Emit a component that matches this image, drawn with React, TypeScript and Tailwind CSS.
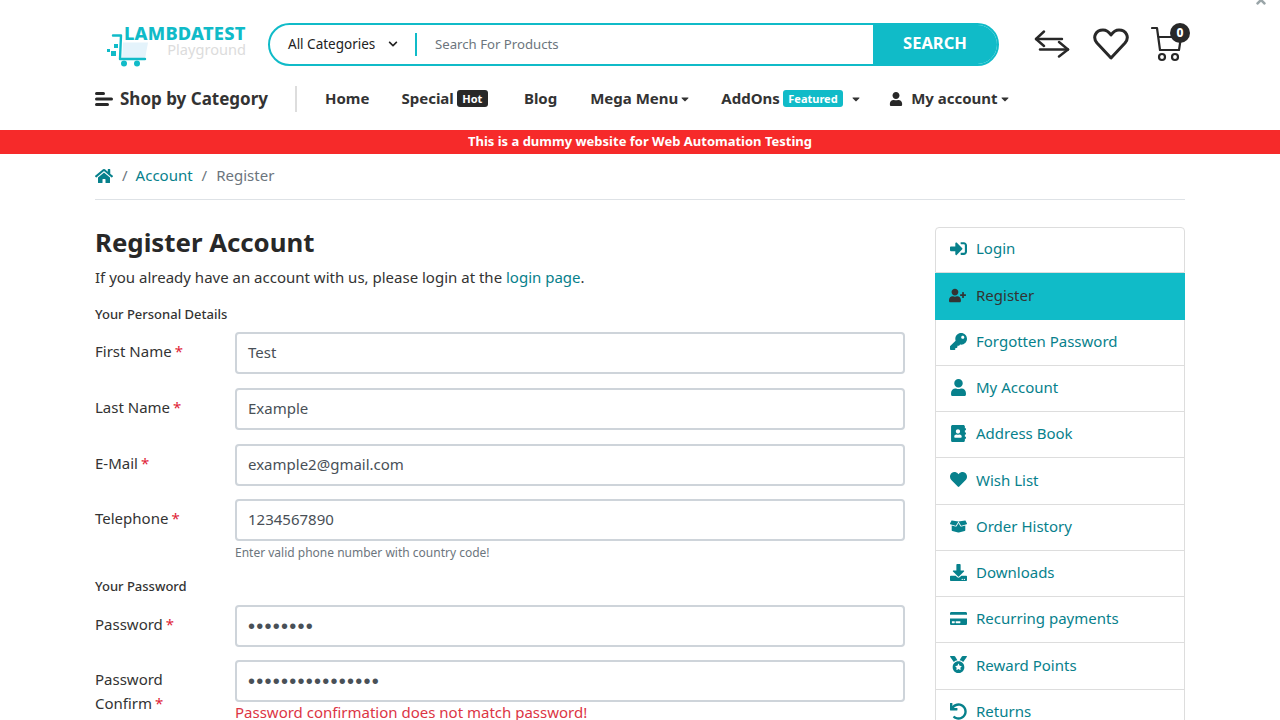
import { ReactNode } from "react";
import {
  FaAddressBook,
  FaBoxOpen,
  FaCaretDown,
  FaChevronDown,
  FaCreditCard,
  FaDownload,
  FaHeart,
  FaHome,
  FaKey,
  FaMedal,
  FaSignInAlt,
  FaTimes,
  FaUndo,
  FaUser,
  FaUserPlus,
} from "react-icons/fa";

const sideLinks = [
  { icon: <FaSignInAlt />, text: "Login" },
  { icon: <FaUserPlus />, text: "Register", active: true },
  { icon: <FaKey />, text: "Forgotten Password" },
  { icon: <FaUser />, text: "My Account" },
  { icon: <FaAddressBook />, text: "Address Book" },
  { icon: <FaHeart />, text: "Wish List" },
  { icon: <FaBoxOpen />, text: "Order History" },
  { icon: <FaDownload />, text: "Downloads" },
  { icon: <FaCreditCard />, text: "Recurring payments" },
  { icon: <FaMedal />, text: "Reward Points" },
  { icon: <FaUndo />, text: "Returns" },
];

const Logo = () => (
  <div className="relative ml-[10px] h-[46px] w-[142px] shrink-0">
    <svg className="absolute left-0 top-[8px]" width="46" height="38" viewBox="0 0 46 38">
      <path d="M18 12.5h25L40 29H17z" fill="#e4f3fb" />
      <path d="M8 5.5h8L15 29h25" fill="none" stroke="#10bbc8" strokeWidth="2.4" strokeLinecap="round" strokeLinejoin="round" />
      <circle cx="19" cy="33.5" r="3" fill="#10bbc8" />
      <circle cx="32" cy="33.5" r="3" fill="#10bbc8" />
      <rect x="2" y="19" width="3" height="3" fill="#10bbc8" />
      <rect x="6" y="21" width="5" height="5" fill="#10bbc8" />
      <rect x="9" y="14" width="4" height="4" fill="#10bbc8" />
    </svg>
    <span className="absolute left-[19px] top-[2px] whitespace-nowrap text-[18.3px] font-extrabold leading-[17px] tracking-[0.2px] text-[#10bbc8]">LAMBDATEST</span>
    <span className="absolute right-[1px] top-[19px] text-[14.6px] leading-[16px] text-[#dcdcdc]">Playground</span>
  </div>
);

const Compare = () => (
  <svg className="mb-[2px]" width="36" height="28" viewBox="0 0 36 28" fill="none" stroke="#282828" strokeWidth="2.4" strokeLinecap="round" strokeLinejoin="round">
    <path d="M10 1.5 2 9l8 7" />
    <path d="M2 9h26" />
    <path d="M6 19.5h28" />
    <path d="M25 12l9 7.5-9 7" />
  </svg>
);

const Heart = () => (
  <svg className="mb-[2px]" width="36" height="32" viewBox="0 0 36 32" fill="none" stroke="#282828" strokeWidth="3" strokeLinejoin="round">
    <path d="M18 30 4 15C-1 9 3 2 10 2c4 0 6 2 8 5 2-3 4-5 8-5 7 0 11 7 6 13z" />
  </svg>
);

const Cart = () => (
  <div className="relative h-[40px] w-[40px]">
    <svg className="absolute left-0 top-[1.5px]" width="34" height="36" viewBox="0 0 34 36" fill="none" stroke="#282828" strokeWidth="2.2" strokeLinecap="round" strokeLinejoin="round">
      <path d="M1 2h5l3 22h19l2-13H7" />
      <circle cx="11" cy="31" r="3" />
      <circle cx="24" cy="31" r="3" />
    </svg>
    <span className="absolute left-[19px] top-[-2px] flex h-[20px] w-[20px] items-center justify-center rounded-full bg-[#282828] text-[12px] font-extrabold text-white">0</span>
  </div>
);

const NavLink = ({ children, caret }: { children: ReactNode; caret?: boolean }) => (
  <a className="flex items-center whitespace-nowrap text-[15px] font-bold text-[#333]">
    {children}
    {caret && <FaCaretDown className="ml-[1px] text-[12px]" />}
  </a>
);

const Field = ({
  label,
  value,
  className,
  dots,
  error,
}: {
  label: ReactNode;
  value: string;
  className?: string;
  dots?: boolean;
  error?: string;
}) => (
  <div className={`flex ${className ?? ""}`}>
    <label className="w-[140px] shrink-0 pt-[7px] text-[15px] leading-[24px] text-[#333]">{label}</label>
    <div className="flex-1">
      <div
        className={`flex h-[42px] items-center rounded-[4px] border-2 border-[#ced4da] px-[11px] text-[#495057] ${
          dots ? "font-['Liberation_Sans',sans-serif] text-[20px] tracking-[1.25px]" : "pb-[2px] text-[15px]"
        }`}
      >
        {value}
      </div>
      {error && <p className="text-[15px] leading-[20px] text-[#dc3545]">{error}</p>}
    </div>
  </div>
);

const Req = () => <span className="ml-[3px] text-[#e01e37]">*</span>;

export default function App() {
  return (
    <div className="relative h-[720px] overflow-hidden bg-white font-['Noto_Sans',sans-serif] text-[#333]">
      <FaTimes className="absolute left-[1254px] top-[-7px] text-[14px] text-[#9aa5a8]" />

      <header className="mx-auto w-[1090px]">
        <div className="flex h-[78px] items-center pt-[11px]">
          <Logo />
          <div className="ml-[21px] flex h-[43px] w-[731px] shrink-0 items-center rounded-full border-2 border-[#10bbc8] pl-[18px]">
            <span className="flex w-[127px] items-center pb-[1px] text-[13.5px] text-[#222]">
              All Categories
              <FaChevronDown className="ml-[13px] text-[10px]" />
            </span>
            <span className="h-[23px] w-[2px] bg-[#10bbc8]" />
            <span className="ml-[18px] flex-1 text-[13.2px] text-[#6c757d]">Search For Products</span>
            <span className="flex h-[39px] w-[124px] items-center justify-center rounded-r-full bg-[#10bbc8] pb-[3px] text-[16.5px] font-bold text-white">SEARCH</span>
          </div>
          <div className="ml-[35px] flex items-center gap-[22.5px]">
            <Compare />
            <Heart />
            <Cart />
          </div>
        </div>

        <nav className="flex h-[41px] items-center">
          <div className="flex w-[200px] items-center whitespace-nowrap text-[17px] font-bold text-[#333]">
            <svg className="mr-[7px]" width="18" height="16" viewBox="0 0 18 16" fill="#282828">
              <rect x="0" y="1" width="10" height="3" rx="1.5" />
              <rect x="0" y="6.5" width="18" height="3" rx="1.5" />
              <rect x="0" y="12" width="14" height="3" rx="1.5" />
            </svg>
            Shop by Category
          </div>
          <span className="mr-[28px] h-[26px] w-[2px] bg-[#ddd]" />
          <div className="flex items-center">
            <NavLink>Home</NavLink>
            <div className="ml-[32px]">
              <NavLink>
                Special
                <span className="ml-[3px] rounded-[3px] bg-[#282828] px-[5.5px] text-[11px] leading-[17px] text-white">Hot</span>
              </NavLink>
            </div>
            <div className="ml-[36px]"><NavLink>Blog</NavLink></div>
            <div className="ml-[33px]"><NavLink caret>Mega Menu</NavLink></div>
            <div className="ml-[30px]">
              <NavLink>
                AddOns
                <span className="ml-[3px] rounded-[3px] bg-[#10bbc8] px-[5.5px] text-[11px] leading-[17px] text-white">Featured</span>
                <FaCaretDown className="ml-[7px] text-[12px]" />
              </NavLink>
            </div>
            <div className="ml-[27px]">
              <NavLink caret>
                <FaUser className="mr-[8px] text-[14px] text-[#282828]" />
                My account
              </NavLink>
            </div>
          </div>
        </nav>
      </header>

      <div className="mt-[11px] flex h-[24px] items-center justify-center bg-[#f62a2a] pb-[1px] text-[13px] font-bold text-white">
        This is a dummy website for Web Automation Testing
      </div>

      <main className="mx-auto w-[1090px]">
        <div className="flex h-[46px] items-center border-b border-[#dee2e6] pb-[2px] text-[15px]">
          <FaHome className="text-[18px] text-[#07818c]" />
          <span className="ml-[9px] mr-[8px] text-[#6c757d]">/</span>
          <span className="text-[#07818c]">Account</span>
          <span className="mx-[9px] text-[#6c757d]">/</span>
          <span className="text-[#6c757d]">Register</span>
        </div>

        <div className="mt-[27px] flex gap-[30px]">
          <div className="w-[810px]">
            <h1 className="mt-[-1px] text-[25.8px] font-bold leading-[32px] text-[#282828]">Register Account</h1>
            <p className="mt-[7px] text-[15px] leading-[24px]">
              If you already have an account with us, please login at the <span className="text-[#07818c]">login page</span>.
            </p>
            <h2 className="mt-[16px] text-[13px] font-medium leading-[18px]">Your Personal Details</h2>
            <Field className="mt-[9px]" label={<>First Name<Req /></>} value="Test" />
            <Field className="mt-[14px]" label={<>Last Name<Req /></>} value="Example" />
            <Field className="mt-[14px]" label={<>E-Mail<Req /></>} value="example2@gmail.com" />
            <Field className="mt-[13px]" label={<>Telephone<Req /></>} value="1234567890" />
            <p className="ml-[140px] mt-[3px] text-[12px] leading-[18px] text-[#6c757d]">Enter valid phone number with country code!</p>
            <h2 className="mt-[15px] text-[13px] font-medium leading-[18px]">Your Password</h2>
            <Field className="mt-[10px]" label={<>Password<Req /></>} value="••••••••" dots />
            <Field
              className="mt-[13px]"
              label={<>Password<br />Confirm<Req /></>}
              value="••••••••••••••••"
              dots
              error="Password confirmation does not match password!"
            />
          </div>

          <aside className="w-[250px]">
            {sideLinks.map(({ icon, text, active }, index) => (
              <a
                key={index}
                className={`flex h-[46.25px] items-center text-[15px] ${
                  active
                    ? "bg-[#10bbc8] pb-[2px] pl-[14px] text-[#333]"
                    : `border-x border-b border-[#ddd] pl-[14px] text-[#07818c] ${index === 0 ? "rounded-t-[4px] border-t pb-[3px]" : "pb-[2px]"}`
                }`}
              >
                <span className={`flex items-center text-[17px] ${active ? "w-[27px]" : "w-[26px]"}`}>{icon}</span>
                {text}
              </a>
            ))}
          </aside>
        </div>
      </main>
    </div>
  );
}
